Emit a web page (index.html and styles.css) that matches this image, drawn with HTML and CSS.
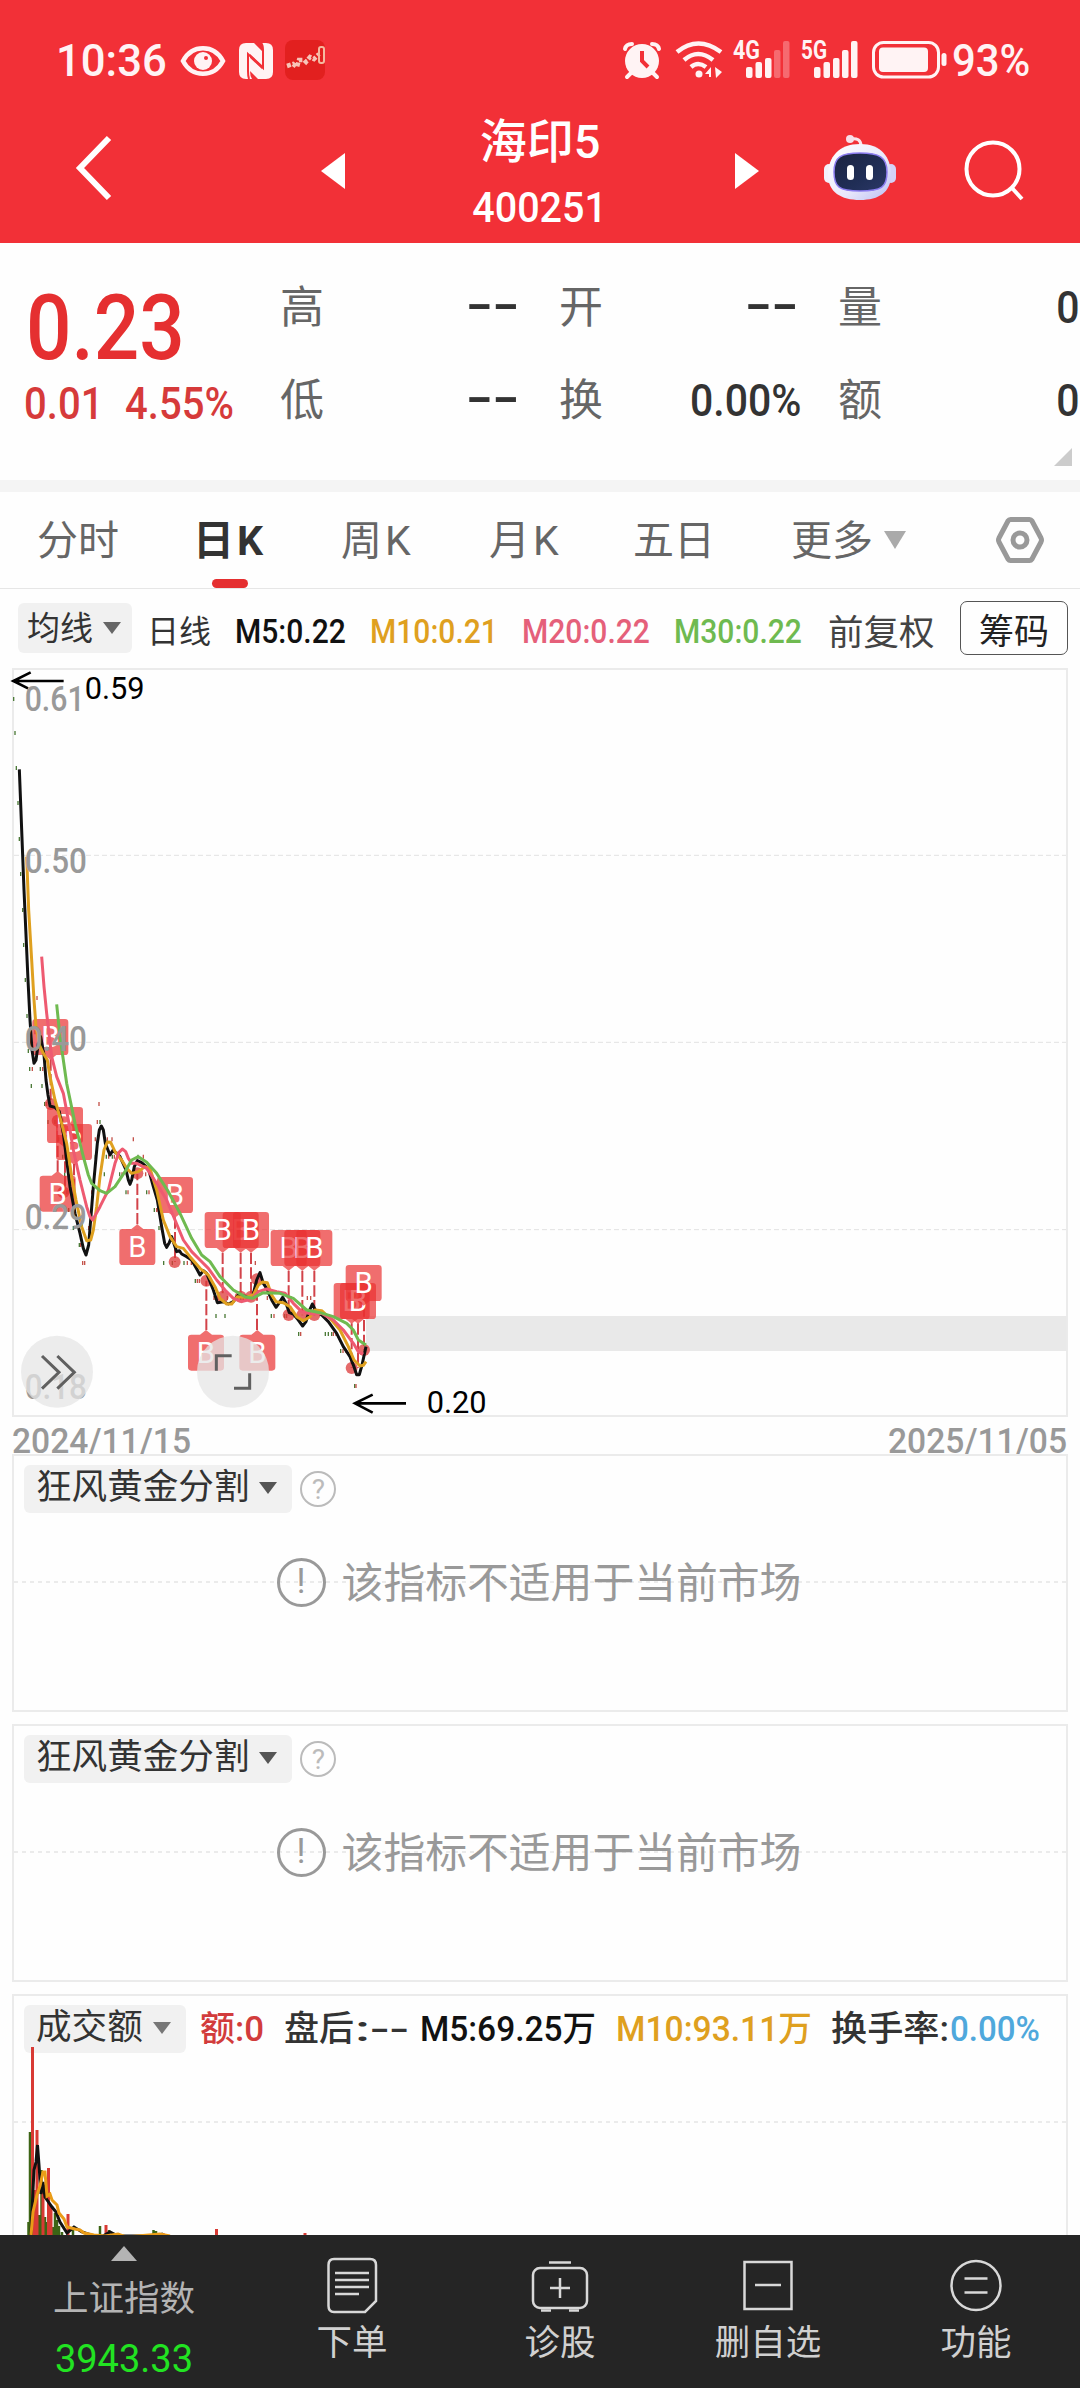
FILE: index.html
```html
<!DOCTYPE html>
<html lang="zh-CN">
<head>
    <meta charset="UTF-8">
    <meta name="viewport" content="width=device-width, initial-scale=1.0">
    <title>海印5 400251</title>
    <link rel="stylesheet" href="styles.css">
</head>
<body>

    <header class="header">
        <!-- Status bar -->
        <div class="status">
            <div class="status-left">
                <span class="clock">10:36</span>
                <svg class="eye" width="46" height="32" viewBox="0 0 46 32" fill="none" stroke="#fff3f4" stroke-width="4.5">
                    <path d="M3 16C12-1 34-1 43 16C34 33 12 33 3 16Z"/>
                    <circle cx="23" cy="16" r="9" fill="#fff3f4" stroke="none"/>
                    <circle cx="26" cy="13" r="2" fill="#f23037" stroke="none"/>
                </svg>
                <svg class="nfc" width="34" height="36" viewBox="0 0 34 36">
                    <path fill="#fff3f4" d="M7 0H15L25 10V24L11 11V28Q11 33 13 36H7Q0 36 0 29V7Q0 0 7 0ZM23 0H27Q34 0 34 7V29Q34 36 27 36H19L9 26V13L23 26Z"/>
                    <path fill="none" stroke="#f23037" stroke-width="2" d="M10 36Q9 33 9 28V11L24 25V7Q24 2 22 0"/>
                </svg>
                <svg width="42" height="40" viewBox="0 0 42 40">
                    <rect width="40" height="40" rx="8" fill="#e2201f"/>
                    <path d="M2 26L8 24L12 27L14 20L19 20L21 22L25 17L29 19L34 14" fill="none" stroke="#f7c4b8" stroke-width="4.5" stroke-dasharray="4 2"/>
                    <rect x="34" y="7" width="5" height="16" rx="2" fill="none" stroke="#f5b9a0" stroke-width="2"/>
                </svg>
            </div>
            <div class="status-right">
                <svg class="alarm" width="38" height="38" viewBox="0 0 38 38">
                    <g fill="none" stroke="#fff3f4" stroke-width="4" stroke-linecap="round">
                        <path d="M2 8Q3 3 9 3M36 8Q35 3 29 3M9 31L4 36M29 31L34 36"/>
                    </g>
                    <circle cx="19" cy="20" r="17" fill="#fff3f4"/>
                    <path d="M19 10V20L25 26" fill="none" stroke="#f23037" stroke-width="4"/>
                </svg>
                <svg class="wifi" width="48" height="38" viewBox="0 0 48 38">
                    <g fill="none" stroke="#fff3f4" stroke-width="4.5">
                        <path d="M2 11Q23-6 46 11M9 19Q23 7 38 19M16 26Q23 20 31 26"/>
                    </g>
                    <circle cx="24" cy="33" r="3.5" fill="#fff3f4"/>
                    <path d="M30 33L36 26V36H34V33ZM40 26L47 31L41 37Z" fill="#fff3f4"/>
                </svg>
                <svg class="signal" width="58" height="40" viewBox="0 0 58 40" fill="#fff3f4">
                    <text class="net" x="0" y="19" textLength="27" lengthAdjust="spacingAndGlyphs">4G</text>
                    <rect x="13" y="27" width="6.500" height="11" rx="2"/><rect x="22.500" y="22" width="6.500" height="16" rx="2"/>
                    <rect x="32" y="18" width="6.500" height="20" rx="2"/>
                    <rect class="off" x="41" y="10" width="6.500" height="28" rx="2"/><rect class="off" x="50" y="1" width="6.500" height="37" rx="2"/>
                </svg>
                <svg class="signal" width="58" height="40" viewBox="0 0 58 40" fill="#fff3f4">
                    <text class="net" x="0" y="19" textLength="26" lengthAdjust="spacingAndGlyphs">5G</text>
                    <rect x="13" y="27" width="6.500" height="11" rx="2"/><rect x="22.500" y="22" width="6.500" height="16" rx="2"/>
                    <rect x="32" y="18" width="6.500" height="20" rx="2"/><rect x="41" y="10" width="6.500" height="28" rx="2"/>
                    <rect x="50" y="1" width="6.500" height="37" rx="2"/>
                </svg>
                <svg class="battery" width="76" height="38" viewBox="0 0 76 38">
                    <rect x="1.500" y="1.500" width="65" height="34.500" rx="10" fill="none" stroke="#fff3f4" stroke-width="3"/>
                    <rect x="7" y="6.500" width="49" height="24.500" rx="4" fill="#fff3f4"/>
                    <rect x="69.500" y="12" width="5" height="13" rx="2.500" fill="#fff3f4"/>
                </svg>
                <span class="clock percent">93%</span>
            </div>
        </div>

        <!-- Title bar -->
        <div class="titlebar">
            <svg class="back" width="40" height="68" viewBox="0 0 40 68"><path d="M34 4L5 34L34 64" fill="none" stroke="#fff" stroke-width="6"/></svg>
            <svg class="prev" width="24" height="36" viewBox="0 0 24 36"><path d="M24 0V36L0 18Z" fill="#fff"/></svg>
            <div class="title">
                <div class="name">海印5</div>
                <div class="code"><span class="num">400251</span></div>
            </div>
            <svg class="next" width="24" height="36" viewBox="0 0 24 36"><path d="M0 0V36L24 18Z" fill="#fff"/></svg>
            <svg class="robot" width="72" height="68" viewBox="0 0 72 68">
                <defs>
                    <linearGradient id="shell" x1="0" y1="0" x2="1" y2="1">
                        <stop offset="0" stop-color="#fff"/><stop offset=".6" stop-color="#e9e8fb"/><stop offset="1" stop-color="#b9bdf2"/>
                    </linearGradient>
                    <linearGradient id="visor" x1="0" y1="0" x2="1" y2="1">
                        <stop offset="0" stop-color="#1c2440"/><stop offset=".6" stop-color="#202e56"/><stop offset="1" stop-color="#2b3766"/>
                    </linearGradient>
                </defs>
                <path d="M26 5Q37 3 37 12" fill="none" stroke="#fbe3ea" stroke-width="3"/>
                <circle cx="26" cy="5" r="4" fill="#f7dfe9"/>
                <rect x="0" y="30" width="10" height="19" rx="5" fill="#f3f0fb"/>
                <rect x="62" y="30" width="10" height="19" rx="5" fill="#d4d2f6"/>
                <path d="M36 10C57 10 67 23 67 41C67 58 55 66 36 66C17 66 4 58 4 41C4 23 15 10 36 10Z" fill="url(#shell)"/>
                <path d="M36 19C55 19 63 23 63 38C63 53 58 57 36 57C15 57 10 53 10 38C10 23 17 19 36 19Z" fill="url(#visor)" stroke="#8c7df0" stroke-width="1.500"/>
                <rect x="23" y="31" width="7" height="15" rx="3.500" fill="#fff"/>
                <rect x="42" y="31" width="7" height="15" rx="3.500" fill="#fff"/>
            </svg>
            <svg class="search" width="62" height="64" viewBox="0 0 62 64" fill="none" stroke="#fff" stroke-width="4">
                <circle cx="30" cy="31" r="26.500"/>
                <path d="M49 50L59 61"/>
            </svg>
        </div>
    </header>

    <!-- Quote -->
    <section class="quote">
        <div class="price-box">
            <div class="price"><span class="num">0.23</span></div>
            <div class="change"><span class="num">0.01</span><span class="num pct">4.55%</span></div>
        </div>
        <div class="pair">
            <div class="cell"><span>高</span><b class="dash">--</b></div>
            <div class="cell"><span>低</span><b class="dash">--</b></div>
        </div>
        <div class="pair">
            <div class="cell"><span>开</span><b class="dash">--</b></div>
            <div class="cell"><span>换</span><b class="num">0.00%</b></div>
        </div>
        <div class="pair">
            <div class="cell"><span>量</span><b class="num">0</b></div>
            <div class="cell"><span>额</span><b class="num">0</b></div>
        </div>
        <svg class="expand" width="18" height="18" viewBox="0 0 18 18"><path d="M18 0V18H0Z" fill="#ccc"/></svg>
    </section>

    <!-- Period tabs -->
    <nav class="tabs">
        <span class="tab t1">分时</span>
        <span class="tab t2 active">日<i>K</i></span>
        <span class="tab t3">周<i>K</i></span>
        <span class="tab t4">月<i>K</i></span>
        <span class="tab t5">五日</span>
        <span class="tab t6">更多</span>
        <svg class="more" width="22" height="18" viewBox="0 0 22 18"><path d="M0 0H22L11 18Z" fill="#aaa"/></svg>
        <svg class="gear" width="50" height="48" viewBox="0 0 50 48" fill="none" stroke="#999" stroke-width="5" stroke-linejoin="round">
            <path d="M15.500 3.500H34.500Q36 3.500 37 5L46 22Q47 24 46 26L37 43Q36 44.500 34.500 44.500H15.500Q14 44.500 13 43L4 26Q3 24 4 22L13 5Q14 3.500 15.500 3.500Z"/>
            <circle cx="25" cy="24" r="7"/>
        </svg>
    </nav>

    <!-- Moving averages -->
    <div class="ma-row">
        <span class="chip ma-chip">均线<svg width="18" height="12" viewBox="0 0 18 12"><path d="M0 0H18L9 12Z" fill="#666"/></svg></span>
        <span class="daily">日线</span>
        <span class="ma m5"><span class="num">M5:0.22</span></span>
        <span class="ma m10"><span class="num">M10:0.21</span></span>
        <span class="ma m20"><span class="num">M20:0.22</span></span>
        <span class="ma m30"><span class="num">M30:0.22</span></span>
        <span class="adjust">前复权</span>
        <button class="chips-btn">筹码</button>
    </div>

    <!-- K line chart, three units per pixel -->
    <section class="kline">
        <svg width="1080" height="770" viewBox="0 -1020 3240 2310">
            <defs>
                <g id="down">
                    <path d="M-44 -54H44Q54 -54 54 -44V44Q54 54 44 54H18L0 68L-18 54H-44Q-54 54 -54 44V-44Q-54 -54 -44 -54Z" fill="#e93030" fill-opacity=".7"/>
                    <text class="mark" x="0" y="31">B</text>
                </g>
                <g id="up">
                    <path d="M-44 54H44Q54 54 54 44V-44Q54 -54 44 -54H18L0 -68L-18 -54H-44Q-54 -54 -54 -44V44Q-54 54 -44 54Z" fill="#e93030" fill-opacity=".7"/>
                    <text class="mark" x="0" y="31">B</text>
                </g>
            </defs>

            <rect x="39" y="-993" width="3162" height="2241" fill="none" stroke="#ebebeb" stroke-width="6"/>
            <path class="grid" d="M42 -434H3198M42 127H3198M42 689H3198"/>
            <rect x="1098" y="948" width="2102" height="105" fill="#e9e9e9"/>

            <!-- Candles -->
            <path class="tick g" d="M39 -903h4M43 -801h4M47 -696h4M52 -591h4M56 -483h4M60 -378h4M66 -270h4M69 -165h4M74 -60h4M79 48h4M83 153h4M87 207h4M92 258h4M119 207h4M124 258h4M132 312h4M142 366h4M163 366h4M174 418h4M186 470h4M192 523h4M198 577h4M204 630h4M218 684h4M236 735h4M298 366h4M284 470h4M311 523h4M317 470h4M335 470h4M357 523h4M376 577h4M396 523h4M412 470h4M438 577h4M461 630h4M475 684h4M489 789h4M515 789h4M550 789h4M584 843h4M646 948h4M673 948h4M720 894h4M812 948h4M852 948h4M894 1002h4M974 1002h4M983 1002h4M993 1002h4M1020 1053h4M1062 1158h4"/>
            <path class="tick r" d="M109 -6h4M103 97h4M95 207h4M126 207h4M138 312h4M295 312h4M290 366h4M170 366h4M284 418h4M320 418h4M334 418h4M398 418h4M273 577h4M264 684h4M246 789h4M252 789h4M192 470h4M201 577h4M240 735h4M324 470h4M341 470h4M364 523h4M382 577h4M428 470h4M445 577h4M435 523h4M468 630h4M482 684h4M500 735h4M560 789h4M572 789h4M590 843h4M596 843h4M640 894h4M652 894h4M680 894h4M764 789h4M728 894h4M800 894h4M820 948h4M858 948h4M871 894h4M920 894h4M930 894h4M900 1002h4M998 1002h4M1006 1002h4M1027 1053h4M1036 1053h4M1066 1158h4"/>

            <!-- Buy points -->
            <path class="stem" d="M152 178V312M173 515V362M195 440V560M222 492V590M412 673V522M525 652V786M619 990V842M771 990V840M668 758V890M722 758V890M753 758V890M866 812V946M907 812V946M943 812V946M1055 970V1104M1074 970V1104M1092 916V1050"/>
            <g fill="#dc3838" fill-opacity=".75">
                <circle cx="152" cy="312" r="18"/><circle cx="173" cy="362" r="18"/><circle cx="190" cy="577" r="18"/>
                <circle cx="412" cy="520" r="18"/><circle cx="524" cy="786" r="18"/><circle cx="619" cy="842" r="18"/>
                <circle cx="771" cy="838" r="18"/><circle cx="668" cy="890" r="18"/><circle cx="722" cy="890" r="18"/>
                <circle cx="753" cy="890" r="18"/><circle cx="866" cy="945" r="18"/><circle cx="907" cy="945" r="18"/>
                <circle cx="943" cy="945" r="18"/><circle cx="1055" cy="1104" r="18"/><circle cx="1092" cy="1050" r="18"/>
            </g>
            <use href="#down" x="151" y="111"/>
            <use href="#down" x="195" y="375"/>
            <use href="#down" x="222" y="426"/>
            <use href="#up" x="173" y="581"/>
            <use href="#up" x="412" y="741"/>
            <use href="#down" x="525" y="585"/>
            <use href="#down" x="722" y="690"/>
            <use href="#down" x="668" y="690"/>
            <use href="#down" x="753" y="690"/>
            <use href="#down" x="866" y="744"/>
            <use href="#down" x="907" y="744"/>
            <use href="#down" x="943" y="744"/>
            <use href="#up" x="618" y="1058"/>
            <use href="#up" x="772" y="1058"/>
            <use href="#down" x="1055" y="903"/>
            <use href="#down" x="1074" y="903"/>
            <use href="#down" x="1091" y="849"/>

            <!-- Averages -->
            <g class="line">
                <polyline stroke="#111" points="58,-692 72,-330 84,-60 90,60 96,150 102,190 108,180 115,130 122,110 132,165 138,240 144,285 150,318 165,322 178,335 190,400 200,480 210,560 225,640 240,700 250,745 258,765 266,735 280,560 292,430 298,390 304,378 310,390 316,430 330,465 338,452 348,458 360,470 378,510 385,540 390,553 395,540 403,500 412,482 425,488 445,505 460,560 472,600 485,680 494,730 500,742 507,730 515,710 530,755 538,752 545,762 560,770 575,780 592,810 600,825 610,812 620,820 640,870 652,908 670,905 685,912 700,905 715,885 740,890 758,890 770,840 780,818 790,850 800,865 815,900 828,922 838,908 848,892 858,910 868,938 880,942 895,960 908,978 918,965 927,935 937,912 947,932 965,945 985,965 1010,1000 1030,1040 1050,1070 1062,1100 1070,1124 1078,1124 1086,1095 1098,1040"/>
                <polyline stroke="#dfa01f" points="80,-430 86,-270 95,-120 102,0 108,80 118,135 130,160 142,180 150,230 165,300 185,370 200,430 215,530 228,600 245,680 260,722 272,720 280,690 290,620 300,530 312,450 322,426 332,427 345,455 365,480 380,505 395,520 415,515 435,500 450,505 470,570 490,660 510,710 530,740 550,745 570,770 600,805 625,825 645,860 660,895 680,912 695,912 712,890 735,892 760,885 775,855 788,846 802,848 815,885 828,905 850,908 870,920 890,950 910,962 930,950 945,930 965,932 990,955 1020,990 1045,1040 1062,1080 1080,1098 1090,1096 1098,1085"/>
                <polyline stroke="#ee5a71" points="125,-130 132,-40 140,40 155,170 170,230 190,280 205,360 220,450 240,540 260,620 270,650 278,660 300,620 325,570 345,490 357,457 367,447 377,455 385,475 395,490 410,490 440,505 470,550 500,600 525,660 550,720 575,755 600,780 625,805 650,840 675,870 700,895 725,905 755,897 775,875 800,867 830,875 855,880 880,910 905,935 935,942 965,940 1000,960 1030,990 1060,1030 1075,1055 1090,1062"/>
                <polyline stroke="#6fba50" points="170,13 180,110 200,250 225,370 250,470 265,525 275,550 300,572 320,580 345,560 375,515 395,480 415,470 440,487 470,520 505,575 540,640 575,715 605,765 630,785 660,830 700,870 735,890 757,895 790,878 840,880 880,895 920,930 960,938 1000,950 1040,970 1060,990 1075,1020 1098,1035"/>
            </g>

            <!-- Price scale -->
            <g class="scale">
                <text x="74" y="-867" textLength="180" lengthAdjust="spacingAndGlyphs">0.61</text>
                <text x="74" y="-382" textLength="187" lengthAdjust="spacingAndGlyphs">0.50</text>
                <text x="74" y="152" textLength="187" lengthAdjust="spacingAndGlyphs">0.40</text>
                <text x="74" y="686" textLength="187" lengthAdjust="spacingAndGlyphs">0.29</text>
                <text x="74" y="1196" textLength="187" lengthAdjust="spacingAndGlyphs">0.18</text>
            </g>
            <g class="extreme">
                <path d="M191 -957H40M92 -983L40 -957L84 -935"/>
                <text x="254" y="-904" textLength="180" lengthAdjust="spacingAndGlyphs">0.59</text>
                <path d="M1218 1210H1065M1118 1184L1065 1210L1118 1238"/>
                <text x="1280" y="1240" textLength="180" lengthAdjust="spacingAndGlyphs">0.20</text>
            </g>

            <!-- Floating buttons -->
            <circle cx="171" cy="1115" r="108" fill="#e6e6e6" fill-opacity=".75"/>
            <path class="float" d="M126 1068L177 1117L126 1166M172 1068L223 1117L172 1166"/>
            <circle cx="699" cy="1115" r="108" fill="#e6e6e6" fill-opacity=".75"/>
            <path class="float" d="M649 1112V1067H695M702 1165H749V1120"/>
        </svg>
    </section>

    <div class="dates">
        <svg width="180" height="36"><text x="0" y="27" textLength="179" lengthAdjust="spacingAndGlyphs">2024/11/15</text></svg>
        <svg width="180" height="36"><text x="0" y="27" textLength="179" lengthAdjust="spacingAndGlyphs">2025/11/05</text></svg>
    </div>

    <!-- Indicator panels -->
    <section class="panel">
        <svg class="mid" width="1052" height="2"><path d="M0 1H1052"/></svg>
        <div class="panel-head">
            <span class="chip">狂风黄金分割<svg width="18" height="12" viewBox="0 0 18 12"><path d="M0 0H18L9 12Z" fill="#555"/></svg></span>
            <span class="help">?</span>
        </div>
        <div class="notice"><span class="warn">!</span><span>该指标不适用于当前市场</span></div>
    </section>

    <section class="panel">
        <svg class="mid" width="1052" height="2"><path d="M0 1H1052"/></svg>
        <div class="panel-head">
            <span class="chip">狂风黄金分割<svg width="18" height="12" viewBox="0 0 18 12"><path d="M0 0H18L9 12Z" fill="#555"/></svg></span>
            <span class="help">?</span>
        </div>
        <div class="notice"><span class="warn">!</span><span>该指标不适用于当前市场</span></div>
    </section>

    <section class="panel">
        <svg class="mid" width="1052" height="2"><path d="M0 1H1052"/></svg>
        <div class="panel-head">
            <span class="chip">成交额<svg width="18" height="12" viewBox="0 0 18 12"><path d="M0 0H18L9 12Z" fill="#777"/></svg></span>
            <svg class="legend" width="850" height="48">
                <text x="2" y="36" fill="#d23c3c" textLength="64" lengthAdjust="spacingAndGlyphs">额:0</text>
                <text x="86" y="36" fill="#333" textLength="70" lengthAdjust="spacingAndGlyphs">盘后</text>
                <text x="157" y="36" fill="#333" textLength="54" lengthAdjust="spacingAndGlyphs">:--</text>
                <text x="222" y="36" fill="#111" textLength="176" lengthAdjust="spacingAndGlyphs">M5:69.25万</text>
                <text x="418" y="36" fill="#dfa01f" textLength="196" lengthAdjust="spacingAndGlyphs">M10:93.11万</text>
                <text x="633" y="36" fill="#333" textLength="118" lengthAdjust="spacingAndGlyphs">换手率:</text>
                <text x="752" y="36" fill="#4fa8dc" textLength="90" lengthAdjust="spacingAndGlyphs">0.00%</text>
            </svg>
        </div>
        <svg class="bars" width="1052" height="190" viewBox="14 2045 1052 190">
            <path stroke="#3c6415" stroke-width="2.500" d="M28.500 2222V2240M30 2132V2240M39 2215V2240M41.500 2170V2240M45 2217V2240M47 2222V2240M53 2227V2240M55 2213V2240M57 2220V2240M59 2226V2240M62 2232V2240M73 2227V2240M100 2226V2240M109 2230V2240M153.500 2230V2240M156 2231V2240"/>
            <path stroke="#d83a34" stroke-width="3" d="M32.500 2047V2240M35 2190V2240M37 2130V2240M43 2190V2240M48.500 2168V2240M51 2206V2240M68 2214V2240M106 2225V2240M216.500 2229V2240M305 2233V2240M163 2233V2240"/>
            <polyline stroke="#111" points="31,2235 33,2190 34,2170 36,2162 37.500,2145 39,2165 41,2194 43,2182 45,2197 52,2207 56,2212 60,2222 67,2233 74,2227 82,2232 94,2236 103,2236 110,2232 118,2236 155,2236 163,2234"/>
            <polyline stroke="#ea9c17" points="31,2235 33,2212 37,2195 40,2186 43,2172 45,2172 47,2196 50,2194 52,2200 57,2205 59,2213 64,2219 67,2227 75,2229 80,2230 84,2233 94,2235 105,2236 118,2234 126,2237 160,2234 170,2236"/>
        </svg>
    </section>

    <!-- Bottom bar -->
    <footer class="bottom">
        <div class="index">
            <svg width="26" height="15" viewBox="0 0 26 15"><path d="M13 0L26 15H0Z" fill="#b4b4b4"/></svg>
            <span>上证指数</span>
            <b>3943.33</b>
        </div>
        <div class="item">
            <svg width="60" height="60" viewBox="0 0 60 60">
                <path d="M12 4H48Q54 4 54 10V46L43 57H12Q6.500 57 6.500 51V10Q6.500 4 12 4ZM13 18H47M13 25H47M13 32H47M13 39H37"/>
            </svg>
            <span>下单</span>
        </div>
        <div class="item">
            <svg width="60" height="60" viewBox="0 0 60 60">
                <rect x="3" y="13" width="54" height="40" rx="7"/>
                <path d="M19 7.500H41M30 23V43M20 33H40M11 55.500H21M39 55.500H49"/>
            </svg>
            <span>诊股</span>
        </div>
        <div class="item">
            <svg width="60" height="60" viewBox="0 0 60 60">
                <path d="M6.500 7H53.500V54H6.500ZM17 30H43"/>
            </svg>
            <span>删自选</span>
        </div>
        <div class="item">
            <svg width="60" height="60" viewBox="0 0 60 60">
                <circle cx="30" cy="30.500" r="24.500"/>
                <path d="M18.500 23.500H41.500M18.500 37.500H41.500"/>
            </svg>
            <span>功能</span>
        </div>
    </footer>

</body>
</html>
```
FILE: styles.css
```css
* {
    box-sizing: border-box;
}
body {
    margin: 0;
    width: 1080px;
    height: 2388px;
    overflow: hidden;
    background: #fefefe;
    font-family: Roboto, "Noto Sans CJK SC", sans-serif;
    color: #333;
}
svg {
    display: block;
    flex: none;
    overflow: visible;
}
b, i {
    font-weight: inherit;
    font-style: normal;
}
.num {
    display: inline-block;
    font-weight: 500;
    transform: scaleX(0.91);
    transform-origin: left;
}

/* header */
.header {
    height: 243px;
    background: #f23037;
    color: #fff;
}
.status {
    height: 100px;
    padding: 40px 0 0 56px;
    display: flex;
    color: #fff3f4;
}
.status-left, .status-right {
    display: flex;
    align-items: flex-start;
}
.status-left {
    width: 567px;
}
.clock {
    width: 124px;
    font-size: 45px;
    line-height: 41px;
    font-weight: 500;
    transform: scaleX(0.97);
    transform-origin: left;
}
.eye {
    margin-top: 5px;
}
.nfc {
    margin: 3px 12px 0 13px;
}
.alarm {
    margin-top: 1px;
}
.wifi {
    margin: 1px 10px 0 14px;
}
.signal {
    margin-right: 10px;
}
.net {
    font-size: 26px;
    font-weight: 700;
}
.off {
    opacity: 0.3;
}
.battery {
    margin: 1px 4px 0 3px;
}
.percent {
    width: 90px;
    transform: scaleX(0.93);
}
.titlebar {
    height: 143px;
    padding: 0 54px 0 75px;
    display: flex;
    align-items: flex-start;
}
.back {
    margin-top: 34px;
}
.prev {
    margin: 53px 0 0 206px;
}
.title {
    width: 390px;
    text-align: center;
}
.name {
    height: 82px;
    font-size: 47px;
    line-height: 84px;
    font-weight: 500;
}
.code {
    font-size: 42px;
    line-height: 52px;
}
.code .num {
    transform: scaleX(0.94);
    transform-origin: center;
}
.next {
    margin-top: 53px;
}
.robot {
    margin: 34px 0 0 65px;
}
.search {
    margin: 38px 0 0 67px;
}

/* quote */
.quote {
    position: relative;
    height: 249px;
    padding: 30px 0 0 24px;
    display: flex;
    border-bottom: 12px solid #f4f4f4;
}
.price-box {
    flex: none;
    width: 256px;
    color: #e52f30;
    white-space: nowrap;
}
.price {
    height: 104px;
    padding-left: 2px;
    font-size: 90px;
    line-height: 112px;
}
.price .num {
    transform: scaleX(0.89);
}
.change {
    display: flex;
    font-size: 45px;
    line-height: 54px;
    color: #d63a3a;
}
.change .num {
    width: 101px;
    transform: scaleX(0.89);
}
.pair {
    flex: none;
    width: 279px;
}
.cell {
    width: 242px;
    height: 93px;
    display: flex;
    justify-content: space-between;
    font-size: 44px;
    line-height: 70px;
    color: #666;
}
.cell b {
    font-size: 45px;
    color: #333;
    transform-origin: right;
}
.cell .dash {
    font-size: 52px;
    line-height: 64px;
    font-weight: 500;
    transform: translateX(-3px) scaleX(1.5);
}

/* corner mark over the quote block */
.expand {
    position: absolute;
    left: 1054px;
    top: 205px;
}

/* tabs */
.tabs {
    height: 97px;
    display: flex;
    padding-left: 37px;
    border-bottom: 1px solid #e6e6e6;
    font-size: 41px;
    line-height: 98px;
    color: #666;
}
.tab {
    height: 96px;
    white-space: nowrap;
}
.tab i {
    margin-left: 3px;
}
.t1 { width: 156px; }
.t2 { width: 148px; }
.t3 { width: 148px; }
.t4 { width: 144px; }
.t5 { width: 158px; }
.t6 { width: 93px; }
.active {
    color: #333;
    font-weight: 700;
}
.active::after {
    content: "";
    display: block;
    width: 36px;
    height: 9px;
    margin: -11px 0 0 19px;
    border-radius: 5px;
    background: #e52f30;
}
.more {
    margin: 39px 0 0 0;
}
.gear {
    margin: 24px 0 0 89px;
}

/* averages */
.ma-row {
    height: 71px;
    padding: 12px 0 0 18px;
    display: flex;
    align-items: flex-start;
    white-space: nowrap;
}
.chip {
    flex: none;
    height: 48px;
    padding: 0 15px 3px 12px;
    display: flex;
    align-items: center;
    gap: 10px;
    background: #f1f1f1;
    border-radius: 6px;
    font-size: 35.6px;
    line-height: 45px;
    white-space: nowrap;
    color: #333;
}
.ma-chip {
    width: 114px;
    height: 50px;
    margin-top: 2px;
    padding: 0 9px;
    font-size: 33px;
}
.daily {
    width: 103px;
    padding-left: 15px;
    font-size: 32px;
    line-height: 62px;
}
.ma {
    font-size: 33px;
    line-height: 62px;
}
.m5 { width: 135px; color: #111; }
.m10 { width: 152px; color: #dfa01f; }
.m20 { width: 152px; color: #e5607a; }
.m30 { width: 154px; color: #6fba50; }
.adjust {
    width: 132px;
    font-size: 35.5px;
    line-height: 65px;
    color: #444;
}
.chips-btn {
    width: 108px;
    height: 54px;
    padding: 0;
    background: none;
    border: 1px solid #555;
    border-radius: 7px;
    font-family: inherit;
    font-size: 35px;
    color: #222;
}

/* chart */
.kline {
    height: 766px;
}
.grid, .mid {
    fill: none;
    stroke: #e2e2e2;
    stroke-width: 3;
    stroke-dasharray: 15 9;
}
.tick {
    fill: none;
    stroke-width: 12;
}
.g { stroke: #4c7a38; }
.r { stroke: #c4524a; }
.stem {
    fill: none;
    stroke: #d2434a;
    stroke-width: 6;
    stroke-dasharray: 34 10;
}
.mark {
    fill: #fff;
    font-size: 88px;
    text-anchor: middle;
}
.line {
    fill: none;
    stroke-width: 9;
    stroke-linejoin: round;
}
.scale text {
    fill: #999;
    font-size: 105px;
    font-weight: 500;
}
.extreme path {
    fill: none;
    stroke: #000;
    stroke-width: 8;
}
.extreme text {
    font-size: 93px;
}
.float {
    fill: none;
    stroke: #606060;
    stroke-width: 9;
}
.dates {
    height: 28px;
    padding: 0 12px;
    display: flex;
    justify-content: space-between;
}
.dates text {
    font-size: 35px;
    font-weight: 500;
    fill: #999;
}

/* indicator panels */
.panel {
    position: relative;
    height: 258px;
    margin: 0 12px 12px;
    padding: 9px 10px;
    border: 2px solid #ebebeb;
}
.panel-head {
    display: flex;
    align-items: center;
}
.help {
    width: 36px;
    height: 36px;
    margin-left: 8px;
    border: 2px solid #bbb;
    border-radius: 50%;
    font-size: 28px;
    line-height: 33px;
    text-align: center;
    color: #bbb;
}
.notice {
    position: relative;
    margin: 39px 2px 0 0;
    display: flex;
    justify-content: center;
    align-items: center;
    gap: 16px;
    font-size: 41.8px;
    line-height: 60px;
    color: #999;
}
.notice span + span {
    padding-top: 4px;
    line-height: 56px;
}
.warn {
    width: 49px;
    height: 49px;
    border: 3px solid #999;
    border-radius: 50%;
    font-size: 35px;
    line-height: 42px;
    text-align: center;
}
.mid {
    position: absolute;
    left: 0;
    top: 125px;
    stroke: #ebebeb;
    stroke-width: 2;
    stroke-dasharray: 4 4;
}
.legend {
    margin-left: 12px;
    font-size: 35px;
    font-weight: 500;
}
.bars {
    position: absolute;
    left: 0;
    top: 49px;
    fill: none;
}
.bars polyline {
    stroke-width: 3;
}

/* bottom bar, stays over the last panel */
.bottom {
    position: absolute;
    left: 0;
    top: 2235px;
    width: 1080px;
    height: 153px;
    padding-left: 20px;
    display: flex;
    background: #252525;
    color: #d0d0d0;
    font-size: 35.5px;
    text-align: center;
}
.index {
    width: 208px;
    margin-right: 20px;
    padding-top: 11px;
    display: flex;
    flex-direction: column;
    align-items: center;
    color: #b4b4b4;
}
.index > span {
    height: 64px;
    line-height: 77px;
}
.index b {
    color: #22e322;
    font-size: 38px;
    line-height: 68px;
}
.item {
    width: 208px;
    padding-top: 20px;
    display: flex;
    flex-direction: column;
    align-items: center;
    line-height: 56px;
}
.item svg {
    fill: none;
    stroke: #d8d8d8;
    stroke-width: 2.5;
}
```
